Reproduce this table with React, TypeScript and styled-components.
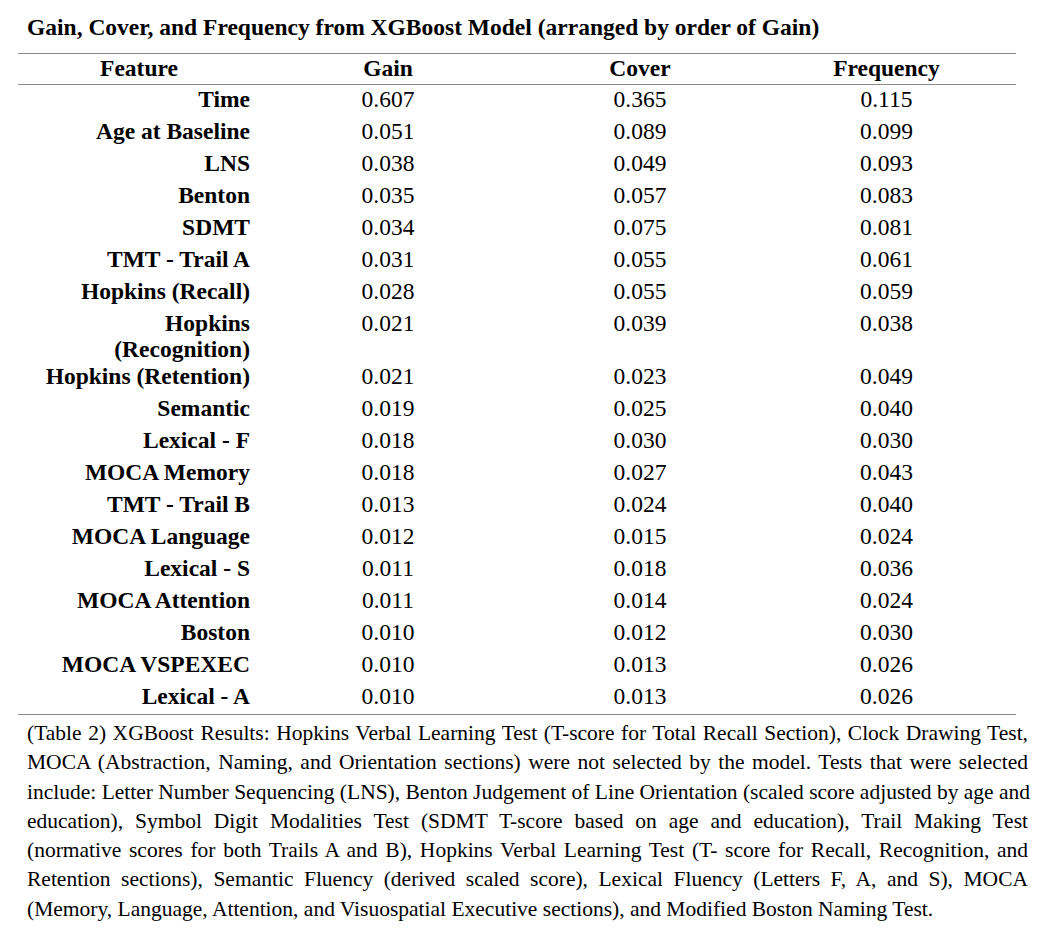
import styled, { createGlobalStyle } from 'styled-components';

const GlobalStyle = createGlobalStyle`
  html, body {
    margin: 0;
    padding: 0;
    background: #ffffff;
  }
  body {
    font-family: "Liberation Serif", "Times New Roman", serif;
    color: #000000;
  }
`;

const Page = styled.div`
  width: 1042px;
  height: 948px;
  box-sizing: border-box;
  padding: 12px 14px 0 18px;
  overflow: hidden;
`;

const Title = styled.h1`
  margin: 0 0 0 9px;
  font-size: 23.5px;
  font-weight: bold;
  line-height: 30px;
  white-space: nowrap;
`;

const Table = styled.div`
  margin-top: 11px;
  width: 998px;
  display: grid;
  grid-template-columns: 242px 256px 248px 252px;
  border-top: 1px solid #8a8a8a;
  border-bottom: 1px solid #8a8a8a;
`;

const HeadCell = styled.div<{ last?: boolean }>`
  height: 31px;
  box-sizing: border-box;
  padding: 1px ${({ last }) => (last ? '7px' : '0')} 0 0;
  border-bottom: 1px solid #8a8a8a;
  font-size: 23.5px;
  font-weight: bold;
  line-height: 26px;
  text-align: center;
  white-space: nowrap;
`;

const FeatureCell = styled.div`
  min-height: 32px;
  box-sizing: border-box;
  padding: 1px 10px 0 24px;
  font-size: 23.5px;
  font-weight: bold;
  line-height: 26px;
  text-align: right;
`;

const ValueCell = styled.div<{ last?: boolean }>`
  min-height: 32px;
  box-sizing: border-box;
  padding: 1px ${({ last }) => (last ? '7px' : '0')} 0 0;
  font-size: 23.5px;
  line-height: 26px;
  text-align: center;
`;

const Caption = styled.div`
  margin: 4px 0 0 9px;
  width: 1001px;
  font-size: 21.5px;
  line-height: 29.3px;
`;

const CaptionLine = styled.div<{ last?: boolean }>`
  white-space: nowrap;
  text-align: justify;
  text-align-last: ${({ last }) => (last ? 'left' : 'justify')};
`;

const rows: [string, string, string, string][] = [
  ['Time', '0.607', '0.365', '0.115'],
  ['Age at Baseline', '0.051', '0.089', '0.099'],
  ['LNS', '0.038', '0.049', '0.093'],
  ['Benton', '0.035', '0.057', '0.083'],
  ['SDMT', '0.034', '0.075', '0.081'],
  ['TMT - Trail A', '0.031', '0.055', '0.061'],
  ['Hopkins (Recall)', '0.028', '0.055', '0.059'],
  ['Hopkins (Recognition)', '0.021', '0.039', '0.038'],
  ['Hopkins (Retention)', '0.021', '0.023', '0.049'],
  ['Semantic', '0.019', '0.025', '0.040'],
  ['Lexical - F', '0.018', '0.030', '0.030'],
  ['MOCA Memory', '0.018', '0.027', '0.043'],
  ['TMT - Trail B', '0.013', '0.024', '0.040'],
  ['MOCA Language', '0.012', '0.015', '0.024'],
  ['Lexical - S', '0.011', '0.018', '0.036'],
  ['MOCA Attention', '0.011', '0.014', '0.024'],
  ['Boston', '0.010', '0.012', '0.030'],
  ['MOCA VSPEXEC', '0.010', '0.013', '0.026'],
  ['Lexical - A', '0.010', '0.013', '0.026'],
];

const captionLines = [
  '(Table 2) XGBoost Results: Hopkins Verbal Learning Test (T-score for Total Recall Section), Clock Drawing Test,',
  'MOCA (Abstraction, Naming, and Orientation sections) were not selected by the model. Tests that were selected',
  'include: Letter Number Sequencing (LNS), Benton Judgement of Line Orientation (scaled score adjusted by age and',
  'education), Symbol Digit Modalities Test (SDMT T-score based on age and education), Trail Making Test',
  '(normative scores for both Trails A and B), Hopkins Verbal Learning Test (T- score for Recall, Recognition, and',
  'Retention sections), Semantic Fluency (derived scaled score), Lexical Fluency (Letters F, A, and S), MOCA',
  '(Memory, Language, Attention, and Visuospatial Executive sections), and Modified Boston Naming Test.',
];

const App = () => {
  return (
    <>
      <GlobalStyle />
      <Page>
        <Title>Gain, Cover, and Frequency from XGBoost Model (arranged by order of Gain)</Title>
        <Table>
          <HeadCell>Feature</HeadCell>
          <HeadCell>Gain</HeadCell>
          <HeadCell>Cover</HeadCell>
          <HeadCell last>Frequency</HeadCell>
          {rows.map(([feature, gain, cover, freq]) => (
            <>
              <FeatureCell key={feature + '-f'}>{feature}</FeatureCell>
              <ValueCell key={feature + '-g'}>{gain}</ValueCell>
              <ValueCell key={feature + '-c'}>{cover}</ValueCell>
              <ValueCell key={feature + '-q'} last>{freq}</ValueCell>
            </>
          ))}
        </Table>
        <Caption>
          {captionLines.map((line, i) => (
            <CaptionLine key={i} last={i === captionLines.length - 1}>{line}</CaptionLine>
          ))}
        </Caption>
      </Page>
    </>
  );
};

export default App;
